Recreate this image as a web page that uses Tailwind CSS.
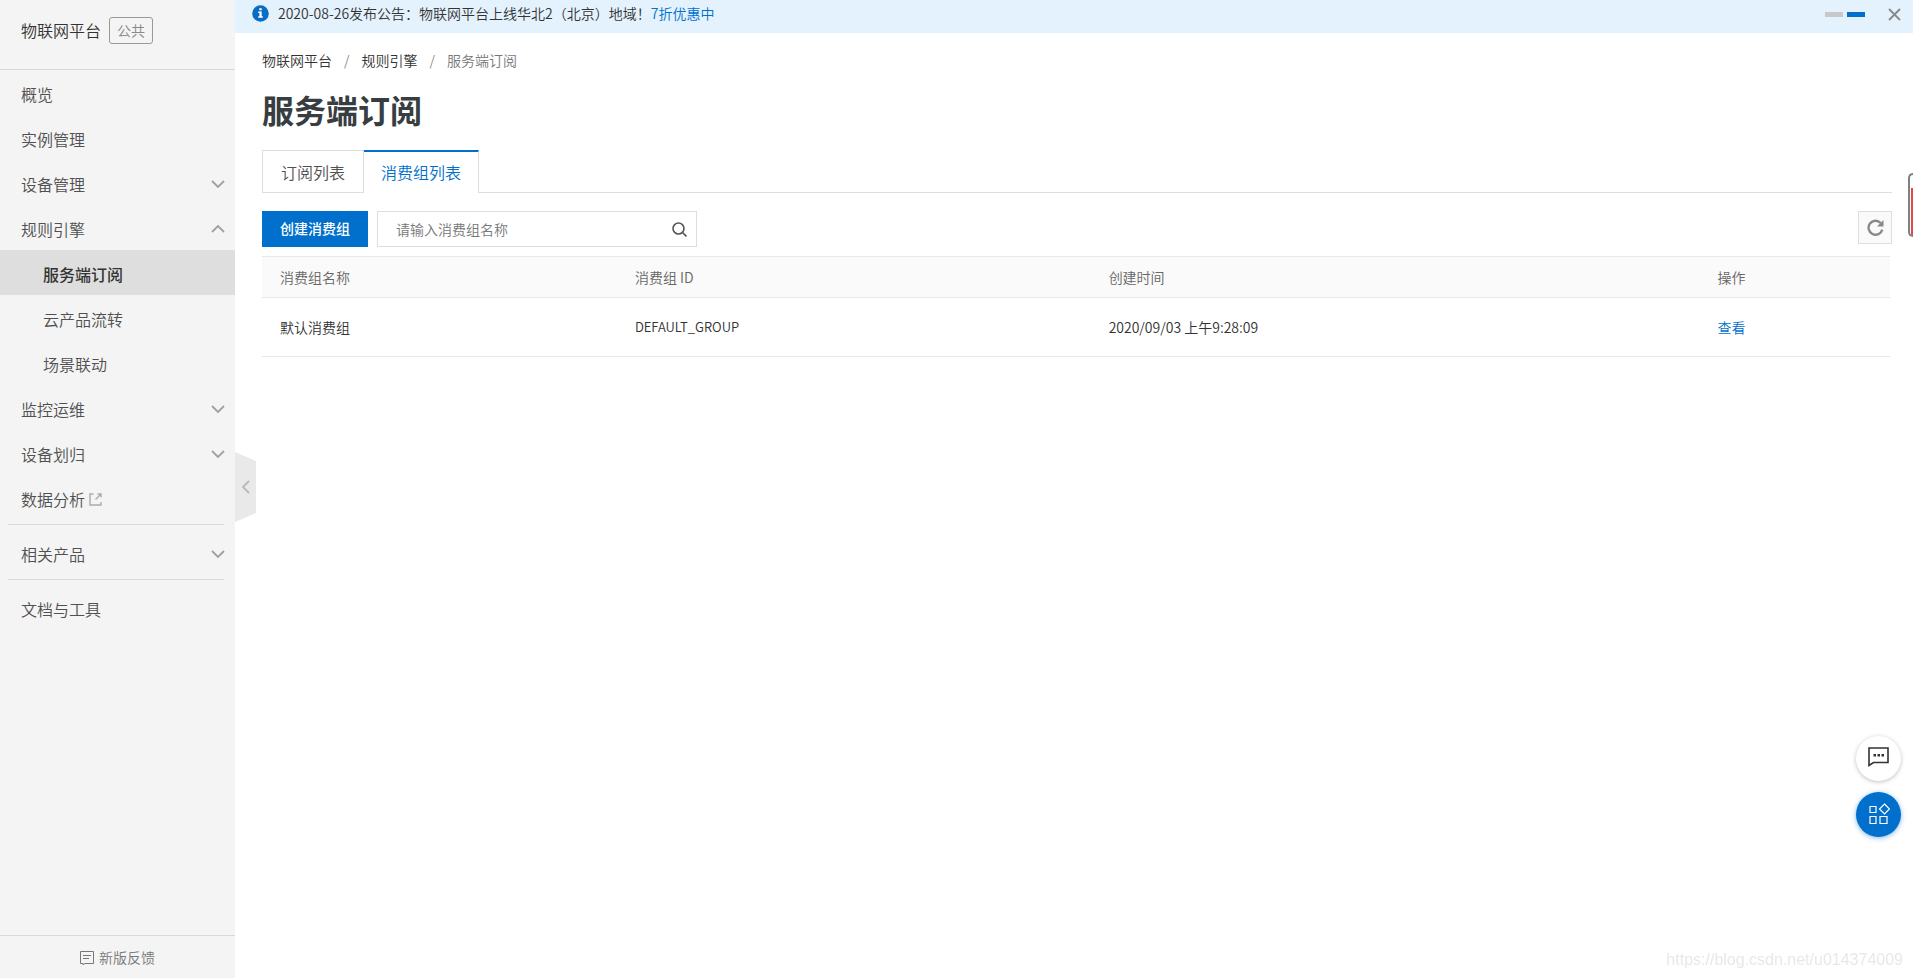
<!DOCTYPE html>
<html lang="zh-CN">
<head>
<meta charset="utf-8">
<meta name="viewport" content="width=device-width, initial-scale=1">
<title>物联网平台 - 服务端订阅</title>
<script src="https://cdn.jsdelivr.net/npm/@tailwindcss/browser@4"></script>
</head>
<body class="flex min-h-screen bg-white font-['Noto_Sans_CJK_SC',sans-serif] text-sm font-[350] text-[#333]">
<svg class="hidden" aria-hidden="true">
  <symbol id="down" viewBox="0 0 14 9"><path d="M1 1l6 6 6-6" fill="none" stroke="currentColor" stroke-width="1.8"/></symbol>
  <symbol id="up" viewBox="0 0 14 9"><path d="M1 8l6-6 6 6" fill="none" stroke="currentColor" stroke-width="1.8"/></symbol>
</svg>

<aside class="relative flex w-[235px] shrink-0 flex-col bg-[#f4f4f4]">
  <div class="flex h-[70px] items-start gap-2 border-b border-[#d8d8d8] pt-[17px] pl-[21px]">
    <span class="text-base/[26px]">物联网平台</span>
    <span class="rounded-[3px] border border-[#999] px-[7px] text-sm/[25px] text-[#888]">公共</span>
  </div>
  <nav class="flex flex-1 flex-col text-base text-[#505050]">
    <a href="#" class="flex h-[45px] items-center pt-0.5 pl-[21px]">概览</a>
    <a href="#" class="flex h-[45px] items-center pt-0.5 pl-[21px]">实例管理</a>
    <button type="button" class="flex h-[45px] items-center justify-between pt-0.5 pr-2.5 pl-[21px]">设备管理<svg class="mt-0.5 h-[9px] w-3.5 text-[#a0a0a0]"><use href="#down"/></svg></button>
    <button type="button" aria-expanded="true" class="flex h-[45px] items-center justify-between pt-0.5 pr-2.5 pl-[21px]">规则引擎<svg class="h-[9px] w-3.5 text-[#a0a0a0]"><use href="#up"/></svg></button>
    <a href="#" aria-current="page" class="flex h-[45px] items-center bg-[#dedede] pt-0.5 pl-[43px] font-medium text-[#333]">服务端订阅</a>
    <a href="#" class="flex h-[45px] items-center pt-0.5 pl-[43px]">云产品流转</a>
    <a href="#" class="flex h-[45px] items-center pt-0.5 pl-[43px]">场景联动</a>
    <button type="button" class="flex h-[45px] items-center justify-between pt-0.5 pr-2.5 pl-[21px]">监控运维<svg class="mt-0.5 h-[9px] w-3.5 text-[#a0a0a0]"><use href="#down"/></svg></button>
    <button type="button" class="flex h-[45px] items-center justify-between pt-0.5 pr-2.5 pl-[21px]">设备划归<svg class="mt-0.5 h-[9px] w-3.5 text-[#a0a0a0]"><use href="#down"/></svg></button>
    <a href="#" class="flex h-[45px] items-center gap-1 pt-0.5 pl-[21px]">数据分析<svg class="mt-0.5 size-[13px] text-[#aaa]" viewBox="0 0 13 13" fill="none" stroke="currentColor" stroke-width="1.4"><path d="M4.500 1H1v11h11V9M8.500 1H12v3.500M11.500 1.500L6.500 6.500"/></svg></a>
    <hr class="mt-1 mr-[11px] mb-[5px] ml-2 border-[#d8d8d8]">
    <button type="button" class="flex h-[45px] items-center justify-between pt-0.5 pr-2.5 pl-[21px]">相关产品<svg class="mt-0.5 h-[9px] w-3.5 text-[#a0a0a0]"><use href="#down"/></svg></button>
    <hr class="mt-1 mr-[11px] mb-[5px] ml-2 border-[#d8d8d8]">
    <a href="#" class="flex h-[45px] items-center pt-0.5 pl-[21px]">文档与工具</a>
  </nav>
  <button type="button" class="flex h-[43px] items-center justify-center gap-[5px] border-t border-[#d8d8d8] text-[#777]">
    <svg class="mt-0.5 size-3.5" viewBox="0 0 14 14" fill="none" stroke="currentColor" stroke-width="1"><path d="M.5.5h13v12H5l-2 1.2V12.500H.5zM3 4.500h8M3 7.500h6"/></svg>新版反馈
  </button>
  <button type="button" aria-label="收起菜单" class="absolute top-[452px] left-full flex h-[70px] w-[21px] items-center justify-center bg-[#e9e9e9] text-[#b8b8b8] [clip-path:polygon(0_0,100%_9px,100%_61px,0_100%)]">
    <svg class="h-3.5 w-2" viewBox="0 0 8 14" fill="none" stroke="currentColor" stroke-width="1.8"><path d="M7 1L1 7l6 6"/></svg>
  </button>
</aside>

<div class="min-w-0 flex-1">
  <div class="flex h-[33px] items-start bg-[#e4f2fe] pr-3 pl-[17px] leading-[26px]">
    <svg class="mt-[5px] mr-[9px] size-[17px]" viewBox="0 0 17 17"><circle cx="8.500" cy="8.500" r="8.300" fill="#0b6cc4"/><path d="M7.300 3.300h2.400v2H7.300zM6.200 6.600h3.500v4.700h1.100v1.500H6.200v-1.500h1.200V8.100H6.200z" fill="#fff"/></svg>
    <p>2020-08-26发布公告：物联网平台上线华北2（北京）地域！<a href="#" class="text-[#0070cc]">7折优惠中</a></p>
    <div class="mt-3 ml-auto flex gap-1">
      <button type="button" aria-label="公告 1" class="h-[5px] w-[18px] bg-[#c8c8c8]"></button>
      <button type="button" aria-label="公告 2" class="h-[5px] w-[18px] bg-[#0070cc]"></button>
    </div>
    <button type="button" aria-label="关闭" class="mt-2 ml-[23px] text-[#888]"><svg class="size-[13px]" viewBox="0 0 13 13" fill="none" stroke="currentColor" stroke-width="1.8"><path d="M1 1l11 11M12 1L1 12"/></svg></button>
  </div>

  <main class="pr-[21px] pl-[27px]">
    <nav aria-label="面包屑" class="flex pt-[15px] leading-6">
      <a href="#">物联网平台</a><span class="px-3 text-[#888]">/</span><a href="#">规则引擎</a><span class="px-3 text-[#888]">/</span><span class="text-[#777]">服务端订阅</span>
    </nav>
    <h1 class="mt-[15px] text-[32px]/[44px] font-bold text-[#373d41]">服务端订阅</h1>

    <div role="tablist" class="mt-[19px] flex h-[43px] border-b border-[#dedede] text-base">
      <button type="button" role="tab" aria-selected="false" class="h-[43px] border border-[#dedede] px-[18px] text-[#505050]">订阅列表</button>
      <button type="button" role="tab" aria-selected="true" class="h-[43px] border-t-2 border-r border-t-[#0070cc] border-r-[#dedede] bg-white px-[17px] pb-0.5 text-[#0070cc]">消费组列表</button>
    </div>

    <div class="mt-[18px] flex items-start">
      <button type="button" class="h-9 bg-[#0070cc] px-[18px] pb-0.5 font-medium text-white">创建消费组</button>
      <form role="search" class="ml-[9px] flex h-9 w-80 items-center border border-[#dedede] pr-[9px]">
        <input type="text" aria-label="消费组名称" placeholder="请输入消费组名称" class="min-w-0 flex-1 pl-[18px] outline-none placeholder:text-[#777]">
        <button type="button" aria-label="搜索" class="text-[#555]"><svg class="size-[15px]" viewBox="0 0 15 15" fill="none" stroke="currentColor" stroke-width="1.600"><circle cx="6.500" cy="6.500" r="5.500"/><path d="M10.500 10.500l4 4"/></svg></button>
      </form>
      <button type="button" aria-label="刷新" class="ml-auto flex h-[33px] w-[34px] items-center justify-center border border-[#dedede] bg-[#fafafa] text-[#888]"><svg class="size-[17px]" viewBox="0 0 17 17"><path d="M13.700 4A7 7 0 1 0 15.300 10.600" fill="none" stroke="currentColor" stroke-width="2.300"/><path d="M16.500 1v6.500H10z" fill="currentColor"/></svg></button>
    </div>

    <div class="mt-[9px] pr-0.5">
      <table class="w-full table-fixed text-left">
        <thead>
          <tr class="h-[41px] border-y border-[#e8e8e8] bg-[#fafafa] text-[#666]">
            <th class="w-[21.8%] px-[18px] font-[350]">消费组名称</th>
            <th class="w-[29.1%] px-[18px] font-[350]">消费组 ID</th>
            <th class="w-[37.4%] px-[18px] font-[350]">创建时间</th>
            <th class="px-[18px] font-[350]">操作</th>
          </tr>
        </thead>
        <tbody>
          <tr class="h-[59px] border-b border-[#e8e8e8]">
            <td class="px-[18px]">默认消费组</td>
            <td class="px-[18px] text-[13px]">DEFAULT_GROUP</td>
            <td class="px-[18px]">2020/09/03 上午9:28:09</td>
            <td class="px-[18px]"><a href="#" class="text-[#0070cc]">查看</a></td>
          </tr>
        </tbody>
      </table>
    </div>
  </main>
</div>

<div class="fixed top-[173px] right-0 h-16 w-[5px] overflow-hidden rounded-l-md border-2 border-r-0 border-[#808080] bg-white pt-[13px] pl-px"><div class="h-full bg-[#e04848]"></div></div>

<div class="fixed right-3 bottom-[141px] flex flex-col gap-[11px]">
  <button type="button" aria-label="在线咨询" class="flex size-[45px] items-center justify-center rounded-full bg-white pb-1 text-[#333] shadow-[0_1px_4px_rgba(0,0,0,0.25)]"><svg class="h-5 w-[21px]" viewBox="0 0 21 20"><path d="M1 1h19v14.500H5.500L1 18.500z" fill="none" stroke="currentColor" stroke-width="1.600"/><path d="M5.500 7h2.500v2.500H5.500zM9.500 7h2.500v2.500H9.500zM13.500 7h2.500v2.500h-2.500z" fill="currentColor"/></svg></button>
  <button type="button" aria-label="应用" class="flex size-[45px] items-center justify-center rounded-full bg-[#0070cc] pb-0.5 pl-0.5 text-white shadow-[0_1px_5px_rgba(0,112,204,0.5)]"><svg class="size-[21px]" viewBox="0 0 21 21" fill="none" stroke="currentColor" stroke-width="1.200"><path d="M1 3.500h6v6H1zM15.500 1l5 5-5 5-5-5zM1 13.500h6v7H1zM11 13.500h7v7h-7z"/></svg></button>
</div>

<p class="pointer-events-none fixed right-2.5 bottom-1.5 font-['Liberation_Sans',sans-serif] text-base font-normal text-[#e8e8e8]">https://blog.csdn.net/u014374009</p>
</body>
</html>
